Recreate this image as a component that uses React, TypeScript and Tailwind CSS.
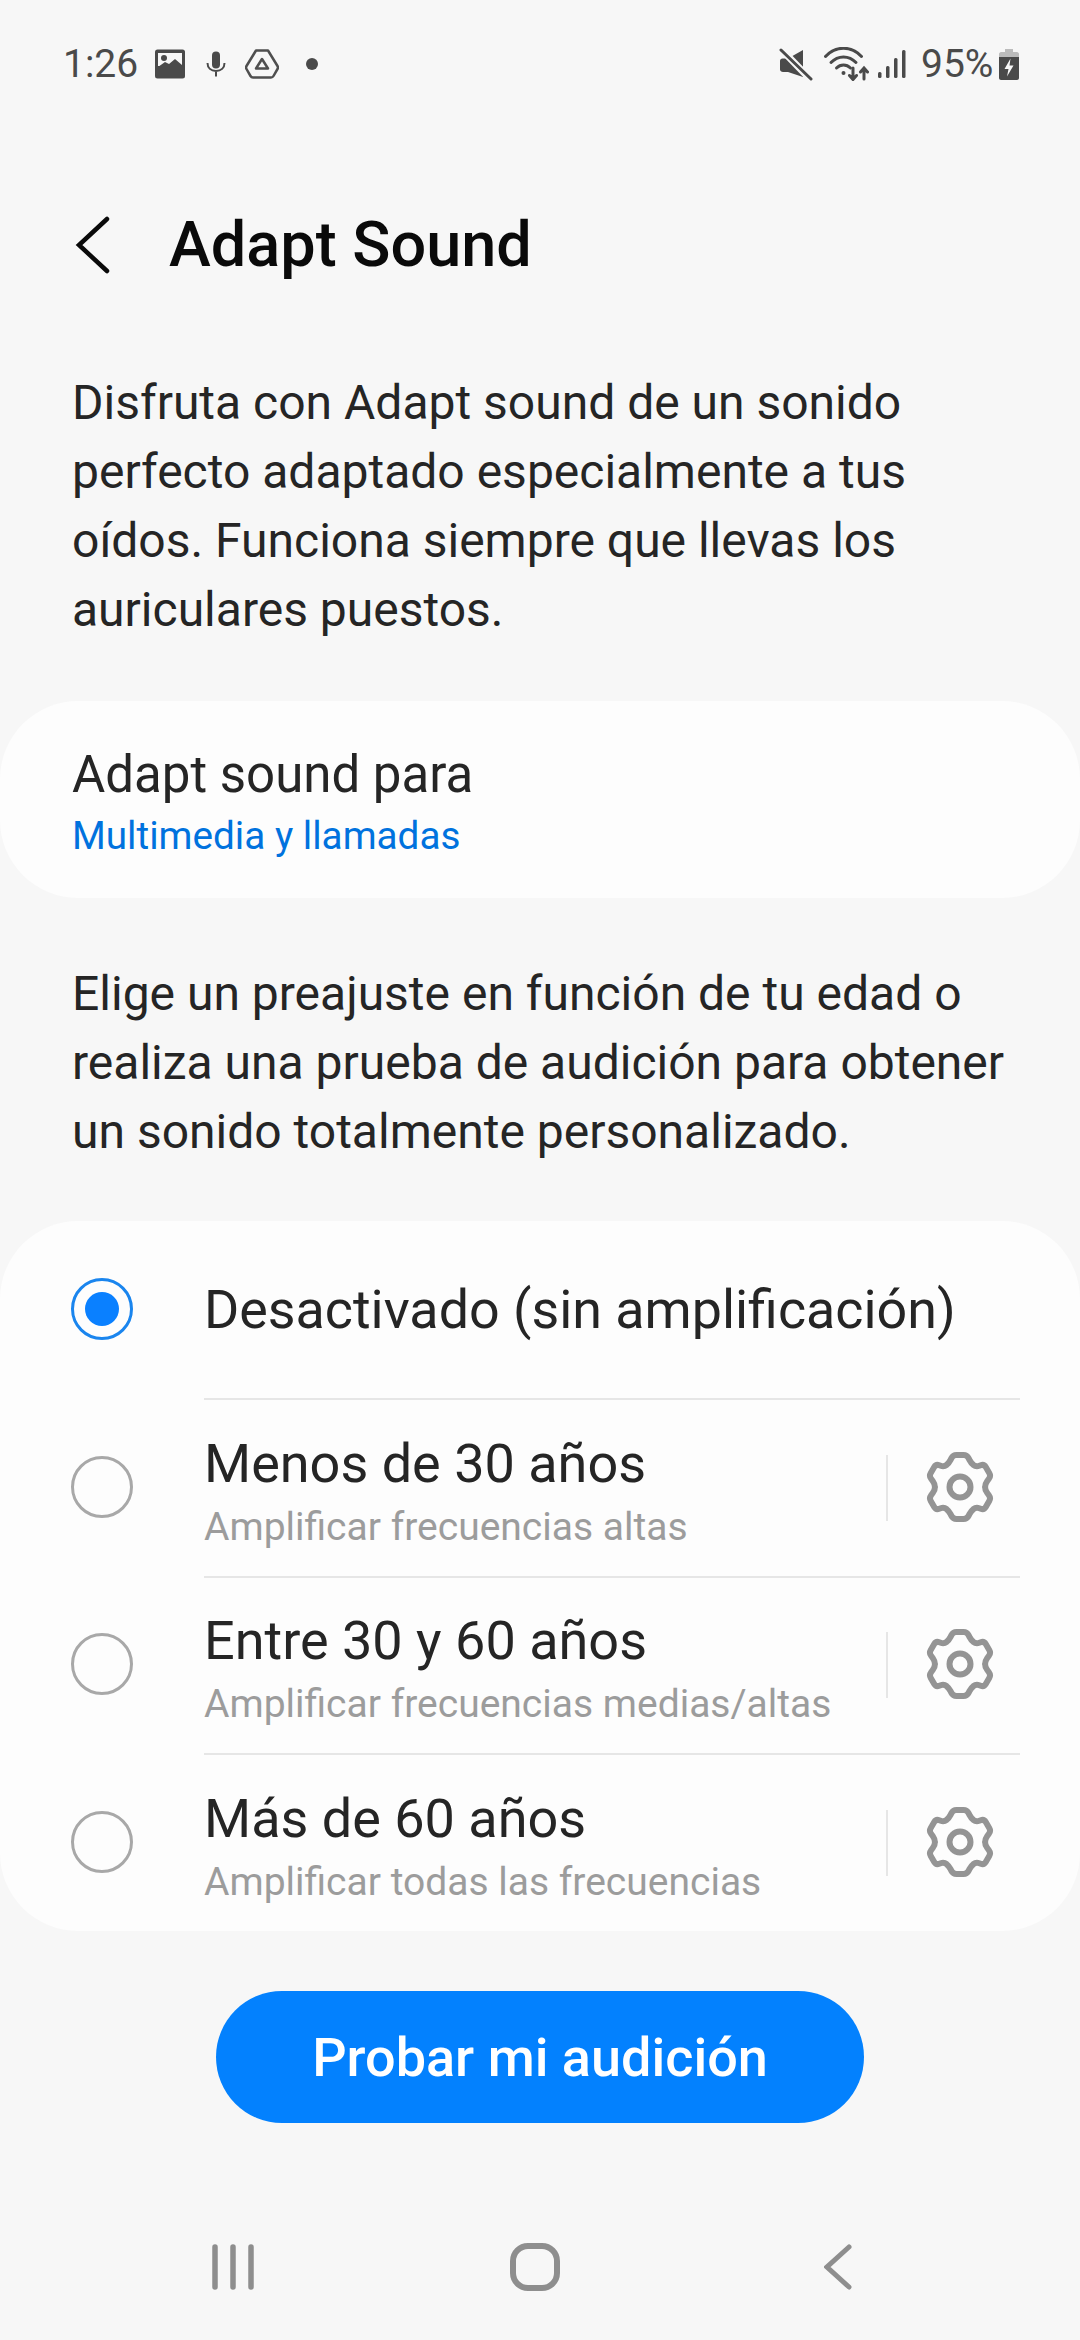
const ink = '#252525'

// outline of the settings cog, corners get rounded in roundedPath
const gearPoints: [number, number][] = [
  [27, 3], [41, 3], [45, 11], [50, 15], [58, 12], [65, 24], [59, 32], [59, 38],
  [65, 46], [58, 58], [50, 55], [45, 59], [41, 67], [27, 67], [23, 59], [18, 55],
  [10, 58], [3, 46], [9, 38], [9, 32], [3, 24], [10, 12], [18, 15], [23, 11],
]

function roundedPath(points: [number, number][], r: number) {
  const n = points.length
  const parts: string[] = []
  points.forEach(([x, y], i) => {
    const [px, py] = points[(i + n - 1) % n]
    const [nx, ny] = points[(i + 1) % n]
    const dp = Math.hypot(px - x, py - y)
    const dn = Math.hypot(nx - x, ny - y)
    const a = `${x + ((px - x) * r) / dp} ${y + ((py - y) * r) / dp}`
    const b = `${x + ((nx - x) * r) / dn} ${y + ((ny - y) * r) / dn}`
    parts.push(`${i === 0 ? 'M' : 'L'}${a}Q${x} ${y} ${b}`)
  })
  return parts.join('') + 'Z'
}

function GearIcon() {
  return (
    <svg width="68" height="70" viewBox="0 0 68 70" fill="none" stroke="#949494" strokeWidth="6">
      <path d={roundedPath(gearPoints, 3.5)} />
      <circle cx="34" cy="35" r="10.500" />
    </svg>
  )
}

function Radio({ checked = false }: { checked?: boolean }) {
  if (checked) {
    return (
      <div className="w-[62px] h-[62px] rounded-full border-[3px] border-[#1a85ee] flex items-center justify-center shrink-0">
        <div className="w-[34px] h-[34px] rounded-full bg-[#0a80ff]" />
      </div>
    )
  }
  return <div className="w-[62px] h-[62px] rounded-full border-[3px] border-[#a8a8a8] shrink-0" />
}

function StatusBar() {
  return (
    <div className="h-[64px] mt-[32px] flex items-center justify-between pl-[63px] pr-[61px] text-[39px] text-[#4a4a4a]">
      <div className="flex items-center">
        <span className="w-[90px]">1:26</span>
        <svg className="ml-[1px]" width="32" height="30" viewBox="0 0 32 30">
          <rect width="30" height="29" x="1" y="0.500" rx="2.500" fill="#4a4a4a" />
          <rect width="24" height="13" x="4" y="4" fill="#f7f7f7" />
          <circle cx="10" cy="9" r="3" fill="#4a4a4a" />
          <path d="M4 18l7-5 4 2 6-5 7 6v3H4z" fill="#4a4a4a" />
        </svg>
        <svg className="ml-[20px]" width="20" height="26" viewBox="0 0 20 26" fill="none">
          <rect x="6" y="0.500" width="8" height="17" rx="4" fill="#4a4a4a" />
          <path d="M1.500 12c0 5 3.500 8 8.500 8s8.500-3 8.500-8M10 20v5.500" stroke="#4a4a4a" strokeWidth="2" />
        </svg>
        <svg className="ml-[19px]" width="34" height="30" viewBox="0 0 34 30" fill="none" stroke="#4f4f4f" strokeWidth="2.500" strokeLinejoin="round">
          <path d="M11 1.500h12l9.500 15.500c.6 1 .6 2 0 3l-4 7c-.6 1-1.400 1.500-2.500 1.500H8c-1.100 0-1.900-.5-2.500-1.500l-4-7c-.6-1-.6-2 0-3z" />
          <path d="M17 10l6 9.500H11z" />
        </svg>
        <div className="ml-[27px] w-[12px] h-[12px] rounded-full bg-[#4a4a4a]" />
      </div>
      <div className="flex items-center">
        <svg width="34" height="33" viewBox="0 0 34 33" fill="none">
          <path d="M1 13c0-1.500 1-2.500 2.500-2.500H9L24 2v27L9 24H4c-1.500 0-3-1-3-2.500z" fill="#4a4a4a" />
          <path d="M2 1l30 31" stroke="#f7f7f7" strokeWidth="7" />
          <path d="M2 2l30 29" stroke="#4a4a4a" strokeWidth="3" strokeLinecap="round" />
        </svg>
        <svg className="ml-[11px]" width="45" height="34" viewBox="0 0 45 34" fill="none" stroke="#4a4a4a" strokeWidth="3" strokeLinecap="round">
          <path d="M1.500 9.500c10-11 26-11 36 0" />
          <path d="M7 15.500c7-7.500 18-7.500 25 0" />
          <path d="M12.500 21c4-4 10-4 14 0" />
          <circle cx="19.500" cy="26" r="2" fill="#4a4a4a" stroke="none" />
          <path d="M29 21v11M25.500 28.500l3.500 4 3.500-4M40 32V21.500M36.500 25l3.500-4 3.500 4" />
        </svg>
        <svg className="ml-[9px]" width="28" height="30" viewBox="0 0 28 30" fill="#4a4a4a">
          <rect x="0" y="23" width="3.500" height="6" rx="1.500" />
          <rect x="8" y="17" width="3.500" height="12" rx="1.500" />
          <rect x="16" y="9" width="3.500" height="20" rx="1.500" />
          <rect x="24" y="1" width="3.500" height="28" rx="1.500" />
        </svg>
        <span className="ml-[15px] w-[70px]">95%</span>
        <svg className="ml-[8px]" width="20" height="31" viewBox="0 0 20 31">
          <path d="M6 0h8v3h4c1 0 2 1 2 2v3H0V5c0-1 1-2 2-2h4z" fill="#bcbcbc" />
          <path d="M0 8h20v21c0 1-1 2-2 2H2c-1 0-2-1-2-2z" fill="#4a4a4a" />
          <path d="M11.500 9.500L5.500 20h4l-1.500 7.500 6.500-11h-4z" fill="#f7f7f7" />
        </svg>
      </div>
    </div>
  )
}

function PresetRow({ title, subtitle }: { title: string; subtitle: string }) {
  return (
    <div className="flex items-center h-[178px]">
      <div className="ml-[71px]">
        <Radio />
      </div>
      <div className="ml-[71px] flex-1 h-full mr-[60px] border-t-2 border-[#e6e6e6] flex items-center">
        <div className="flex-1 pt-[8px]">
          <div className="text-[54px] leading-[70px]" style={{ color: ink }}>{title}</div>
          <div className="text-[39px] leading-[56px] text-[#9c9c9c]">{subtitle}</div>
        </div>
        <div className="w-[2px] h-[66px] bg-[#e6e6e6]" />
        <div className="ml-[38px] mr-[26px] -mt-[2px]">
          <GearIcon />
        </div>
      </div>
    </div>
  )
}

export default function App() {
  return (
    <div className="w-[1080px] h-[2340px] bg-[#f7f7f7] flex flex-col font-['Roboto',sans-serif] overflow-hidden">
      <StatusBar />

      <div className="flex items-center h-[100px] mt-[99px]">
        <svg className="ml-[75px] shrink-0" width="36" height="58" viewBox="0 0 36 58" fill="none" stroke="#0a0a0a" strokeWidth="4.500" strokeLinecap="round">
          <path d="M32 3L4 29l28 26" />
        </svg>
        <h1 className="ml-[58px] text-[63px] font-medium text-[#0a0a0a]">Adapt Sound</h1>
      </div>

      <p className="mt-[73px] pl-[72px] pr-[73px] text-[48px] leading-[69px]" style={{ color: ink }}>
        Disfruta con Adapt sound de un sonido perfecto adaptado especialmente a tus oídos. Funciona siempre que llevas los auriculares puestos.
      </p>

      <div className="mt-[57px] h-[197px] rounded-[78px] bg-[#fdfdfd] pl-[72px] flex flex-col justify-center pt-[6px]">
        <div className="text-[51px] leading-[66px]" style={{ color: ink }}>Adapt sound para</div>
        <div className="text-[38.700px] leading-[56px] text-[#0072de]">Multimedia y llamadas</div>
      </div>

      <p className="mt-[61px] pl-[72px] pr-[73px] text-[48px] leading-[69px]" style={{ color: ink }}>
        Elige un preajuste en función de tu edad o realiza una prueba de audición para obtener un sonido totalmente personalizado.
      </p>

      <div className="mt-[55px] h-[710px] rounded-[78px] bg-[#fdfdfd] flex flex-col overflow-hidden">
        <div className="flex items-center h-[177px]">
          <div className="ml-[71px]">
            <Radio checked />
          </div>
          <span className="ml-[71px] text-[53.800px] pt-[2px]" style={{ color: ink }}>Desactivado (sin amplificación)</span>
        </div>
        <PresetRow title="Menos de 30 años" subtitle="Amplificar frecuencias altas" />
        <PresetRow title="Entre 30 y 60 años" subtitle="Amplificar frecuencias medias/altas" />
        <PresetRow title="Más de 60 años" subtitle="Amplificar todas las frecuencias" />
      </div>

      <button className="mt-[60px] mx-auto w-[648px] h-[132px] rounded-full bg-[#0381fe] text-white text-[54px] font-medium">
        Probar mi audición
      </button>

      <div className="mt-auto h-[140px] flex items-start pl-[212px] pt-[44px]">
        <svg width="42" height="46" viewBox="0 0 42 46" stroke="#8e8e8e" strokeWidth="5.500" strokeLinecap="round">
          <path d="M3 3v40M21 3v40M39 3v40" />
        </svg>
        <svg className="ml-[256px] -mt-[1px]" width="50" height="48" viewBox="0 0 50 48" fill="none" stroke="#8e8e8e" strokeWidth="6">
          <rect x="3" y="3" width="44" height="42" rx="15" />
        </svg>
        <svg className="ml-[264px]" width="28" height="46" viewBox="0 0 28 46" fill="none" stroke="#8e8e8e" strokeWidth="5" strokeLinecap="round">
          <path d="M25 3L3 23l22 20" />
        </svg>
      </div>
    </div>
  )
}
